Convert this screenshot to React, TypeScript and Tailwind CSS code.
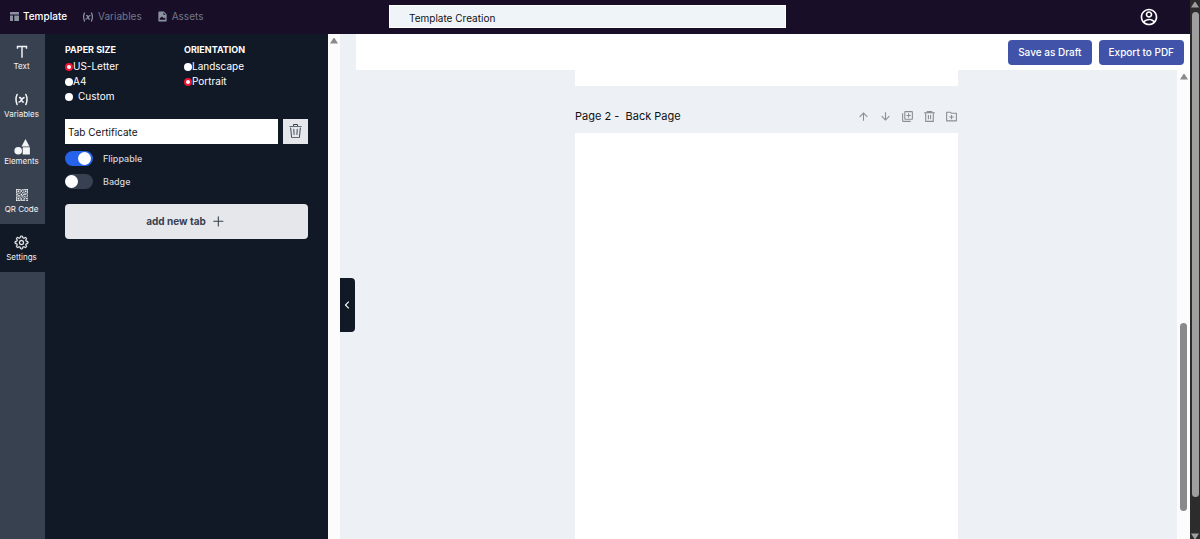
import { useState } from "react";
import clsx from "clsx";
import { GoGear, GoPlus, GoTrash } from "react-icons/go";
import { MdOutlineLibraryAdd } from "react-icons/md";
import { BsQrCode } from "react-icons/bs";
import { TbVariable } from "react-icons/tb";
import {
  RiAccountCircleLine,
  RiArrowDownLine,
  RiArrowLeftSLine,
  RiArrowUpLine,
  RiDeleteBin6Line,
  RiFolderAddLine,
} from "react-icons/ri";

type IconProps = { size?: number; className?: string };

function TemplateIcon({ size = 9, className }: IconProps) {
  return (
    <svg width={size} height={size} viewBox="0 0 18 18" fill="currentColor" className={className}>
      <path d="M0 1a1 1 0 0 1 1-1h16a1 1 0 0 1 1 1v4H0zM0 7h6v11H1a1 1 0 0 1-1-1zM8.500 7H18v10a1 1 0 0 1-1 1H8.500z" />
    </svg>
  );
}

function VariableIcon({ size = 12, className }: IconProps) {
  return <TbVariable size={size} strokeWidth={2.5} className={className} />;
}

function GearIcon({ size = 15, className }: IconProps) {
  return <GoGear size={size} stroke="currentColor" strokeWidth={0.5} className={className} />;
}

function AssetIcon({ size = 11, className }: IconProps) {
  return (
    <svg width={size} height={size} viewBox="0 0 24 24" fill="currentColor" className={className}>
      <path
        fillRule="evenodd"
        d="M5 1h10l6 6v14a2 2 0 0 1-2 2H5a2 2 0 0 1-2-2V3a2 2 0 0 1 2-2zm9 2v5h5zM6 19h12v-5l-3 2-4-4-5 4z"
      />
    </svg>
  );
}

function TextIcon({ size = 16, className }: IconProps) {
  return (
    <svg width={size} height={size} viewBox="0 0 16 16" fill="none" stroke="currentColor" strokeWidth="1.300" className={className}>
      <path d="M4 5V3.200h8V5M8 3.200V13" />
    </svg>
  );
}

function ShapesIcon({ size = 16, className }: IconProps) {
  return (
    <svg width={size} height={size} viewBox="0 0 16 16" fill="currentColor" className={className}>
      <path d="M11.500 0l4 7.600h-8z" />
      <circle cx="4.200" cy="11.800" r="3.800" />
      <rect x="8.700" y="8.300" width="7.200" height="7.200" rx="0.500" />
    </svg>
  );
}

const navTabs = [
  { label: "Template", icon: TemplateIcon, size: 9, active: true },
  { label: "Variables", icon: VariableIcon, size: 12, active: false },
  { label: "Assets", icon: AssetIcon, size: 11, active: false },
];

const tools = [
  { label: "Text", icon: TextIcon, size: 18 },
  { label: "Variables", icon: VariableIcon, size: 15 },
  { label: "Elements", icon: ShapesIcon, size: 16 },
  { label: "QR Code", icon: BsQrCode, size: 12 },
  { label: "Settings", icon: GearIcon, size: 15 },
];

const pageActions = [
  { label: "Move page up", icon: RiArrowUpLine },
  { label: "Move page down", icon: RiArrowDownLine },
  { label: "Duplicate page", icon: MdOutlineLibraryAdd },
  { label: "Delete page", icon: RiDeleteBin6Line },
  { label: "Add page", icon: RiFolderAddLine },
];

function Header() {
  return (
    <header className="flex h-[34px] shrink-0 items-center bg-[#180e28] pb-px">
      <nav className="flex w-[389px] shrink-0 items-center gap-[15px] pl-2.5 text-[10px]">
        {navTabs.map((tab) => (
          <a
            key={tab.label}
            href="#"
            className={clsx(
              "flex items-center gap-1",
              tab.active ? "font-medium text-white" : "text-[#727987]",
            )}
          >
            <tab.icon size={tab.size} className="text-[#8b93a1]" />
            {tab.label}
          </a>
        ))}
      </nav>
      <input
        aria-label="Template name"
        defaultValue="Template Creation"
        className="h-[23px] w-1/3 border border-white bg-[#eff4f9] px-[19px] pt-[3px] text-[10px] text-[#111] outline-none"
      />
      <button aria-label="Account" className="mr-[31px] ml-auto text-white">
        <RiAccountCircleLine size={20} />
      </button>
    </header>
  );
}

function ToolRail() {
  const [selected, setSelected] = useState("Settings");
  return (
    <aside className="w-[45px] shrink-0 bg-[#384150]">
      <div className="flex h-[238px] flex-col">
        {tools.map((tool) => (
          <button
            key={tool.label}
            onClick={() => setSelected(tool.label)}
            className={clsx(
              "flex flex-1 flex-col items-center justify-center pr-0.5 text-[8px] leading-3 text-[#f3f4f6]",
              selected === tool.label && "bg-[#111826]",
            )}
          >
            <span className="flex h-[17px] items-center">
              <tool.icon size={tool.size} />
            </span>
            {tool.label}
          </button>
        ))}
      </div>
    </aside>
  );
}

type RadioProps = { name: string; label: string; defaultChecked?: boolean; spaced?: boolean };

function Radio({ name, label, defaultChecked, spaced }: RadioProps) {
  return (
    <label className={clsx("flex h-[15px] items-center text-[10px]", spaced && "gap-[5px]")}>
      <input
        type="radio"
        name={name}
        defaultChecked={defaultChecked}
        className="h-2 w-2 shrink-0 appearance-none rounded-full bg-white checked:border-2 checked:border-[#f0142f]"
      />
      {label}
    </label>
  );
}

function Toggle({ label, defaultChecked }: { label: string; defaultChecked?: boolean }) {
  return (
    <label className="flex items-center gap-2.5 text-[9px] font-medium text-[#d1d5db]">
      <input type="checkbox" defaultChecked={defaultChecked} className="peer sr-only" />
      <span className="flex h-[15px] w-7 items-center rounded-full bg-[#374151] peer-checked:justify-end peer-checked:bg-[#2563eb] peer-checked:pr-0.5">
        <span className="h-[13px] w-[13px] rounded-full bg-white" />
      </span>
      {label}
    </label>
  );
}

function SettingsPanel() {
  return (
    <section className="w-[283px] shrink-0 bg-[#111826] px-5 pt-2 text-white">
      <div className="flex">
        <fieldset className="w-[119px]">
          <legend className="mb-px text-[9px] leading-4 font-bold">PAPER SIZE</legend>
          <Radio name="paper" label="US-Letter" defaultChecked />
          <Radio name="paper" label="A4" />
          <Radio name="paper" label="Custom" spaced />
        </fieldset>
        <fieldset>
          <legend className="mb-px text-[9px] leading-4 font-bold">ORIENTATION</legend>
          <Radio name="orientation" label="Landscape" />
          <Radio name="orientation" label="Portrait" defaultChecked />
        </fieldset>
      </div>
      <div className="mt-[15px] flex gap-[5px]">
        <input
          aria-label="Tab name"
          defaultValue="Tab Certificate"
          className="h-[25px] min-w-0 flex-1 bg-white px-[3px] text-[10px] text-[#111] outline-none"
        />
        <button aria-label="Delete tab" className="flex h-[25px] w-[25px] items-center justify-center bg-[#e5e7eb] text-[#374151]">
          <GoTrash size={15} />
        </button>
      </div>
      <div className="mt-[7px] flex flex-col gap-2">
        <Toggle label="Flippable" defaultChecked />
        <Toggle label="Badge" />
      </div>
      <button className="mt-[15px] flex h-[35px] w-full items-center justify-center gap-1 rounded bg-[#e5e7eb] text-[10px] font-bold text-[#374151]">
        add new tab
        <GoPlus size={17} />
      </button>
    </section>
  );
}

function ScrollArrow({ down, className }: { down?: boolean; className?: string }) {
  return (
    <svg width="8" height="6" viewBox="0 0 8 6" fill="currentColor" className={clsx("shrink-0", className)}>
      <path d={down ? "M0 0.500h8L4.500 6h-1z" : "M0 5.500h8L4.500 0h-1z"} />
    </svg>
  );
}

function Canvas() {
  return (
    <div className="flex min-h-0 flex-1">
      <div className="min-w-0 flex-1 overflow-hidden">
        <article className="mx-auto w-[383px]">
          <div className="h-4 bg-white" />
          <div className="flex h-[47px] items-center justify-between pt-3.5">
            <h2 className="text-[11px] whitespace-pre text-[#111]">{"Page 2 -  Back Page"}</h2>
            <div className="flex gap-[9px] text-[#8b8e92]">
              {pageActions.map((action) => (
                <button key={action.label} aria-label={action.label}>
                  <action.icon size={13} />
                </button>
              ))}
            </div>
          </div>
          <div className="h-screen bg-white" />
        </article>
      </div>
      <div className="flex w-[13px] shrink-0 flex-col items-center bg-[#fcfcfc] pt-1 pb-7 text-[#8a8a8a]">
        <ScrollArrow />
        <div className="mt-auto h-[43%] w-[7px] rounded-full bg-[#8a8a8a]" />
      </div>
    </div>
  );
}

export default function App() {
  return (
    <div className="flex h-screen overflow-hidden font-['Inter',sans-serif]">
      <div className="flex min-w-0 flex-1 flex-col">
        <Header />
        <div className="flex min-h-0 flex-1">
          <ToolRail />
          <SettingsPanel />
          <div className="flex w-3 shrink-0 justify-center bg-[#fcfcfc] pt-1 text-[#8a8a8a]">
            <ScrollArrow />
          </div>
          <main className="flex min-w-0 flex-1 bg-[#edf0f5]">
            <div className="flex w-4 shrink-0 items-center">
              <button
                aria-label="Collapse panel"
                className="mt-9 flex h-[54px] w-[15px] items-center rounded-r bg-[#111826] text-white"
              >
                <RiArrowLeftSLine size={14} />
              </button>
            </div>
            <div className="flex min-w-0 flex-1 flex-col">
              <div className="flex h-9 shrink-0 items-center justify-end gap-[7px] bg-white pr-1.5 text-[10px] font-medium text-white">
                <button className="h-[25px] rounded-sm bg-[#4053a8] px-2.5">Save as Draft</button>
                <button className="h-[25px] rounded-sm bg-[#4053a8] px-2.5">Export to PDF</button>
              </div>
              <Canvas />
            </div>
          </main>
        </div>
      </div>
      <div className="flex w-2.5 shrink-0 flex-col items-center bg-[#2c2c2c] pt-0.5 text-[#9f9f9f]">
        <ScrollArrow />
        <div className="mt-1 mb-9 w-[7px] flex-1 rounded-full bg-[#9f9f9f]" />
        <ScrollArrow down />
      </div>
    </div>
  );
}
